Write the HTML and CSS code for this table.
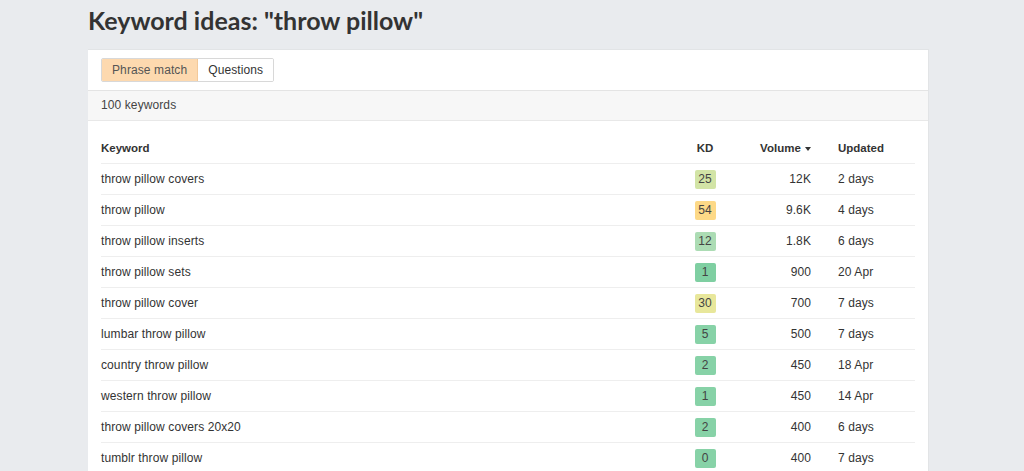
FILE: index.html
```html
<!DOCTYPE html>
<html>
<head>
<meta charset="utf-8">
<link rel="stylesheet" href="styles.css">
</head>
<body>
<div class="page">
  <h1 class="title">Keyword ideas: "throw pillow"</h1>
  <div class="card">
    <div class="tabs">
      <div class="tabgroup">
        <span class="tab active">Phrase match</span>
        <span class="tab">Questions</span>
      </div>
    </div>
    <div class="count">100 keywords</div>
    <div class="table">
      <div class="row head">
        <div class="c-kw">Keyword</div>
        <div class="c-kd">KD</div>
        <div class="c-vol">Volume <span class="caret"></span></div>
        <div class="c-upd">Updated</div>
      </div>
      <div class="row"><div class="c-kw">throw pillow covers</div><div class="c-kd"><span class="badge k25">25</span></div><div class="c-vol">12K</div><div class="c-upd">2 days</div></div>
      <div class="row"><div class="c-kw">throw pillow</div><div class="c-kd"><span class="badge k54">54</span></div><div class="c-vol">9.6K</div><div class="c-upd">4 days</div></div>
      <div class="row"><div class="c-kw">throw pillow inserts</div><div class="c-kd"><span class="badge k12">12</span></div><div class="c-vol">1.8K</div><div class="c-upd">6 days</div></div>
      <div class="row"><div class="c-kw">throw pillow sets</div><div class="c-kd"><span class="badge k1">1</span></div><div class="c-vol">900</div><div class="c-upd">20 Apr</div></div>
      <div class="row"><div class="c-kw">throw pillow cover</div><div class="c-kd"><span class="badge k30">30</span></div><div class="c-vol">700</div><div class="c-upd">7 days</div></div>
      <div class="row"><div class="c-kw">lumbar throw pillow</div><div class="c-kd"><span class="badge k5">5</span></div><div class="c-vol">500</div><div class="c-upd">7 days</div></div>
      <div class="row"><div class="c-kw">country throw pillow</div><div class="c-kd"><span class="badge k5">2</span></div><div class="c-vol">450</div><div class="c-upd">18 Apr</div></div>
      <div class="row"><div class="c-kw">western throw pillow</div><div class="c-kd"><span class="badge k5">1</span></div><div class="c-vol">450</div><div class="c-upd">14 Apr</div></div>
      <div class="row"><div class="c-kw">throw pillow covers 20x20</div><div class="c-kd"><span class="badge k5">2</span></div><div class="c-vol">400</div><div class="c-upd">6 days</div></div>
      <div class="row"><div class="c-kw">tumblr throw pillow</div><div class="c-kd"><span class="badge k5">0</span></div><div class="c-vol">400</div><div class="c-upd">7 days</div></div>
    </div>
  </div>
</div>
</body>
</html>
```
FILE: styles.css
```css
html, body {
  margin: 0;
  padding: 0;
  background: #e9ebee;
  height: 100%;
  overflow: hidden;
}
.page {
  width: 841px;
  margin-left: 88px;
  font-family: "Liberation Sans", Arial, sans-serif;
  color: #333;
}
.title {
  font-family: Lato, "Liberation Sans", sans-serif;
  font-weight: 700;
  font-size: 25px;
  line-height: 32px;
  color: #333;
  margin: 4px 0 13px 0;
}
.card {
  background: #fff;
  border-top: 1px solid #e2e4e6;
  border-right: 1px solid #e2e4e6;
  height: 460px;
}
.tabs {
  padding: 8px 13px 8px 13px;
  border-bottom: 1px solid #e4e4e4;
}
.tabgroup {
  display: inline-flex;
  border: 1px solid #d8d8d8;
  border-radius: 2px;
  overflow: hidden;
}
.tab {
  font-size: 12px;
  line-height: 22px;
  padding: 0 10px;
  color: #333;
  background: #fff;
  letter-spacing: 0.1px;
}
.tab.active {
  background: #fdd9af;
  color: #555;
  padding: 0 10px;
  border-right: 1px solid #f3c99a;
}
.count {
  background: #f7f7f7;
  border-bottom: 1px solid #e8e8e8;
  font-size: 12px;
  line-height: 29px;
  padding: 0 13px;
  color: #444;
  letter-spacing: 0.1px;
}
.table {
  margin: 12px 13px 0 13px;
}
.row {
  display: grid;
  grid-template-columns: 1fr 60px 76px 104px;
  height: 30px;
  align-items: center;
  border-bottom: 1px solid #eeeeee;
  font-size: 12px;
  color: #333;
  letter-spacing: 0.1px;
}
.row.head {
  font-weight: 700;
  font-size: 11.5px;
  color: #333;
  letter-spacing: 0;
}
.c-kd { text-align: center; }
.c-vol { text-align: right; }
.c-upd { padding-left: 27px; }
.caret {
  display: inline-block;
  width: 0;
  height: 0;
  border-left: 3.5px solid transparent;
  border-right: 3.5px solid transparent;
  border-top: 4px solid #333;
  vertical-align: middle;
  margin-left: 1px;
}
.badge {
  display: inline-block;
  width: 21px;
  height: 19px;
  line-height: 19px;
  border-radius: 2px;
  text-align: center;
  color: #444;
  letter-spacing: 0;
}
.k25 { background: #d2e4a6; }
.k54 { background: #fdd987; }
.k12 { background: #acdcb4; }
.k1 { background: #7fcfa2; }
.k30 { background: #e8e79b; }
.k5 { background: #87d2a7; }
```
